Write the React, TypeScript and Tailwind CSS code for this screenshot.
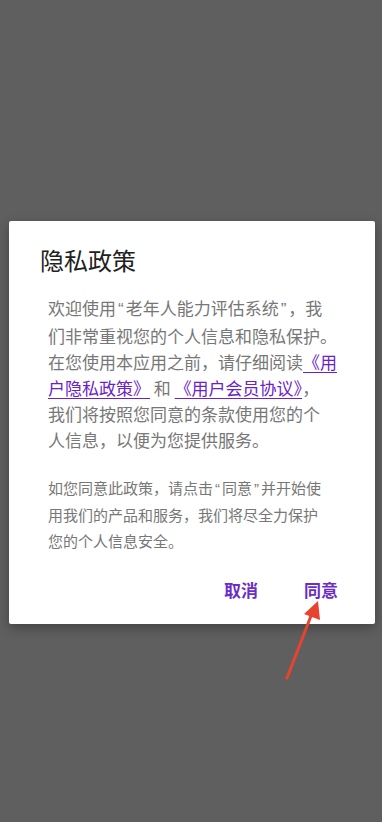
import React from 'react';

const font = { fontFamily: '"Noto Sans CJK SC", "Noto Sans", sans-serif' };

// narrow curly quotes, the CJK font draws them full width
function Q({ c }: { c: string }) {
  return (
    <span className="mx-[2px]" style={{ fontFamily: '"Liberation Sans", sans-serif' }}>
      {c}
    </span>
  );
}

export default function App() {
  return (
    <div className="relative w-[382px] h-[822px] bg-[#5f5f5f] flex flex-col" style={font}>
      <div className="mt-[221px] ml-[9px] mr-[7px] h-[403px] bg-white rounded-[2px] shadow-[0_4px_12px_rgba(0,0,0,0.3)] flex flex-col">
        <h1 className="pl-[31px] pt-[23px] text-[24px] leading-[32px] text-[#212121] font-normal">隐私政策</h1>
        <div className="pl-[39px] pt-[19px] leading-[26px] text-[#777777] whitespace-nowrap">
          <div className="text-[17px]">
            <p>欢迎使用<Q c="“" />老年人能力评估系统<Q c="”" />，我</p>
            <p>们非常重视您的个人信息和隐私保护。</p>
            <p>
              在您使用本应用之前，请仔细阅读
              <span className="text-[#6a22c8] underline underline-offset-[3px]">《用</span>
            </p>
            <p>
              <span className="text-[#6a22c8] underline underline-offset-[3px]">户隐私政策》</span>
              <span> 和 </span>
              <span className="text-[#6a22c8] underline underline-offset-[3px]">《用户会员协议》</span>，
            </p>
            <p>我们将按照您同意的条款使用您的个</p>
            <p>人信息，以便为您提供服务。</p>
          </div>
          <div className="h-[22px]" />
          <div className="text-[15px]">
            <p>如您同意此政策，请点击<Q c="“" />同意<Q c="”" />并开始使</p>
            <p>用我们的产品和服务，我们将尽全力保护</p>
            <p>您的个人信息安全。</p>
          </div>
        </div>
        <div className="mt-auto mb-[22px] flex justify-end gap-[46px] pr-[37px] text-[17px] leading-[24px] font-bold text-[#6a2ec4]">
          <button>取消</button>
          <button>同意</button>
        </div>
      </div>
      <svg className="absolute left-0 top-0" width="382" height="822" viewBox="0 0 382 822">
        <line x1="287" y1="678" x2="314" y2="608" stroke="#e8432e" strokeWidth="3" strokeLinecap="round" />
        <polygon points="318,601 304,614 320,620" fill="#e8432e" />
      </svg>
    </div>
  );
}
